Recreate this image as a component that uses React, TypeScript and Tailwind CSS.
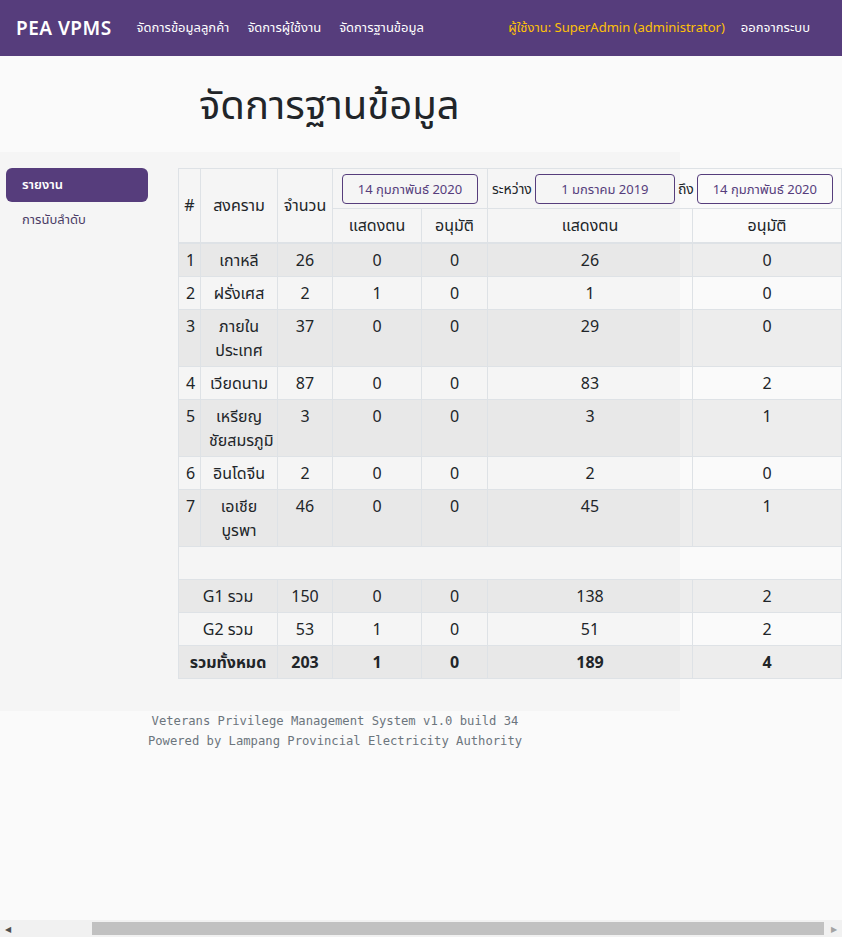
import React from 'react';

const thai = { fontFamily: '"Noto Sans", "Noto Sans Thai", "Loma", "Garuda", sans-serif' };

type Row = { no: number; war: string[]; total: number; a: number; b: number; c: number; d: number };

const rows: Row[] = [
  { no: 1, war: ['เกาหลี'], total: 26, a: 0, b: 0, c: 26, d: 0 },
  { no: 2, war: ['ฝรั่งเศส'], total: 2, a: 1, b: 0, c: 1, d: 0 },
  { no: 3, war: ['ภายใน', 'ประเทศ'], total: 37, a: 0, b: 0, c: 29, d: 0 },
  { no: 4, war: ['เวียดนาม'], total: 87, a: 0, b: 0, c: 83, d: 2 },
  { no: 5, war: ['เหรียญ', 'ชัยสมรภูมิ'], total: 3, a: 0, b: 0, c: 3, d: 1 },
  { no: 6, war: ['อินโดจีน'], total: 2, a: 0, b: 0, c: 2, d: 0 },
  { no: 7, war: ['เอเชีย', 'บูรพา'], total: 46, a: 0, b: 0, c: 45, d: 1 },
];

const td = 'border border-[#dee2e6] px-2 py-[4px] align-top text-center';

const DateBox = ({ children, w }: { children: React.ReactNode; w: string }) => (
  <div className={`${w} h-[30px] border border-[#563d7c] rounded-[4px] flex items-center justify-center text-[13px] text-[#563d7c]`}>
    {children}
  </div>
);

export default function App() {
  return (
    <div className="min-h-[937px] bg-[#fafafa] flex flex-col text-[#212529]" style={thai}>
      {/* navbar */}
      <nav className="h-14 bg-[#563d7c] flex items-center px-4 shrink-0">
        <span className="text-white text-[19px] font-semibold tracking-wide mr-[25px]">PEA VPMS</span>
        <div className="flex gap-[18px] text-[13px] text-white">
          <span>จัดการข้อมูลลูกค้า</span>
          <span>จัดการผู้ใช้งาน</span>
          <span>จัดการฐานข้อมูล</span>
        </div>
        <div className="ml-auto flex gap-4 text-[13px] pr-[16px]">
          <span className="text-[#ffc107]">ผู้ใช้งาน: SuperAdmin (administrator)</span>
          <span className="text-white">ออกจากระบบ</span>
        </div>
      </nav>

      {/* page title */}
      <div className="h-24 flex items-center pl-[199px]">
        <h1 className="text-[40px] font-normal">จัดการฐานข้อมูล</h1>
      </div>

      <div className="w-[680px] bg-[#f5f5f5] pt-4 pb-8 flex">
        {/* sidebar */}
        <div className="w-[178px] shrink-0 pl-[6px] pr-[30px]">
          <div className="h-[34px] rounded-md bg-[#563d7c] text-white text-[13px] font-semibold flex items-center pl-4">
            รายงาน
          </div>
          <div className="h-[36px] flex items-center pl-4 text-[13px] text-[#4b3c66]">การนับลำดับ</div>
        </div>

        {/* table */}
        <table className="w-[663px] shrink-0 table-fixed border-collapse text-[16px] leading-6">
          <colgroup>
            <col className="w-[22px]" />
            <col className="w-[77px]" />
            <col className="w-[55px]" />
            <col className="w-[89px]" />
            <col className="w-[66px]" />
            <col className="w-[205px]" />
            <col className="w-[149px]" />
          </colgroup>
          <thead>
            <tr className="h-[40px]">
              <th rowSpan={2} className="border border-[#dee2e6] border-b-2 px-0 font-normal">#</th>
              <th rowSpan={2} className="border border-[#dee2e6] border-b-2 px-0 font-normal">สงคราม</th>
              <th rowSpan={2} className="border border-[#dee2e6] border-b-2 px-0 font-normal">จำนวน</th>
              <th colSpan={2} className="border border-[#dee2e6] font-normal px-[9px]">
                <DateBox w="w-[136px]">14 กุมภาพันธ์ 2020</DateBox>
              </th>
              <th colSpan={2} className="border border-[#dee2e6] font-normal pl-[4px]">
                <div className="flex items-center text-[14px]">
                  <span className="mr-[3px]">ระหว่าง</span>
                  <DateBox w="w-[140px]">1 มกราคม 2019</DateBox>
                  <span className="mx-[3px]">ถึง</span>
                  <DateBox w="w-[136px]">14 กุมภาพันธ์ 2020</DateBox>
                </div>
              </th>
            </tr>
            <tr className="h-[34px]">
              <th className="border border-[#dee2e6] border-b-2 font-normal">แสดงตน</th>
              <th className="border border-[#dee2e6] border-b-2 font-normal">อนุมัติ</th>
              <th className="border border-[#dee2e6] border-b-2 font-normal">แสดงตน</th>
              <th className="border border-[#dee2e6] border-b-2 font-normal">อนุมัติ</th>
            </tr>
          </thead>
          <tbody>
            {rows.map((r) => (
              <tr key={r.no} className={r.no % 2 === 1 ? 'bg-black/5' : ''}>
                <td className="border border-[#dee2e6] py-[4px] pl-[7px] align-top">{r.no}</td>
                <td className={td + ' px-0'}>
                  {r.war.map((w) => (
                    <div key={w}>{w}</div>
                  ))}
                </td>
                <td className={td}>{r.total}</td>
                <td className={td}>{r.a}</td>
                <td className={td}>{r.b}</td>
                <td className={td}>{r.c}</td>
                <td className={td}>{r.d}</td>
              </tr>
            ))}
            <tr className="h-[33px]">
              <td colSpan={7} className="border border-[#dee2e6]"></td>
            </tr>
            <tr className="bg-black/5">
              <td colSpan={2} className={td}>G1 รวม</td>
              <td className={td}>150</td>
              <td className={td}>0</td>
              <td className={td}>0</td>
              <td className={td}>138</td>
              <td className={td}>2</td>
            </tr>
            <tr>
              <td colSpan={2} className={td}>G2 รวม</td>
              <td className={td}>53</td>
              <td className={td}>1</td>
              <td className={td}>0</td>
              <td className={td}>51</td>
              <td className={td}>2</td>
            </tr>
            <tr className="bg-black/5 font-bold">
              <td colSpan={2} className={td + ' px-0'}>รวมทั้งหมด</td>
              <td className={td}>203</td>
              <td className={td}>1</td>
              <td className={td}>0</td>
              <td className={td}>189</td>
              <td className={td}>4</td>
            </tr>
          </tbody>
        </table>
      </div>

      {/* footer */}
      <div
        className="w-[670px] text-center text-[12.2px] leading-5 text-[#6c757d]"
        style={{ fontFamily: '"DejaVu Sans Mono", "Liberation Mono", monospace' }}
      >
        <div>Veterans Privilege Management System v1.0 build 34</div>
        <div>Powered by Lampang Provincial Electricity Authority</div>
      </div>

      {/* horizontal scrollbar */}
      <div className="mt-auto h-[17px] bg-[#f1f1f1] flex items-center">
        <div className="w-4 flex justify-center text-[8px] text-[#505050]">◀</div>
        <div className="flex-1 h-full py-[2px] pl-[76px] pr-[2px]">
          <div className="h-full bg-[#c1c1c1]"></div>
        </div>
        <div className="w-4 flex justify-center text-[8px] text-[#a3a3a3]">▶</div>
      </div>
    </div>
  );
}
